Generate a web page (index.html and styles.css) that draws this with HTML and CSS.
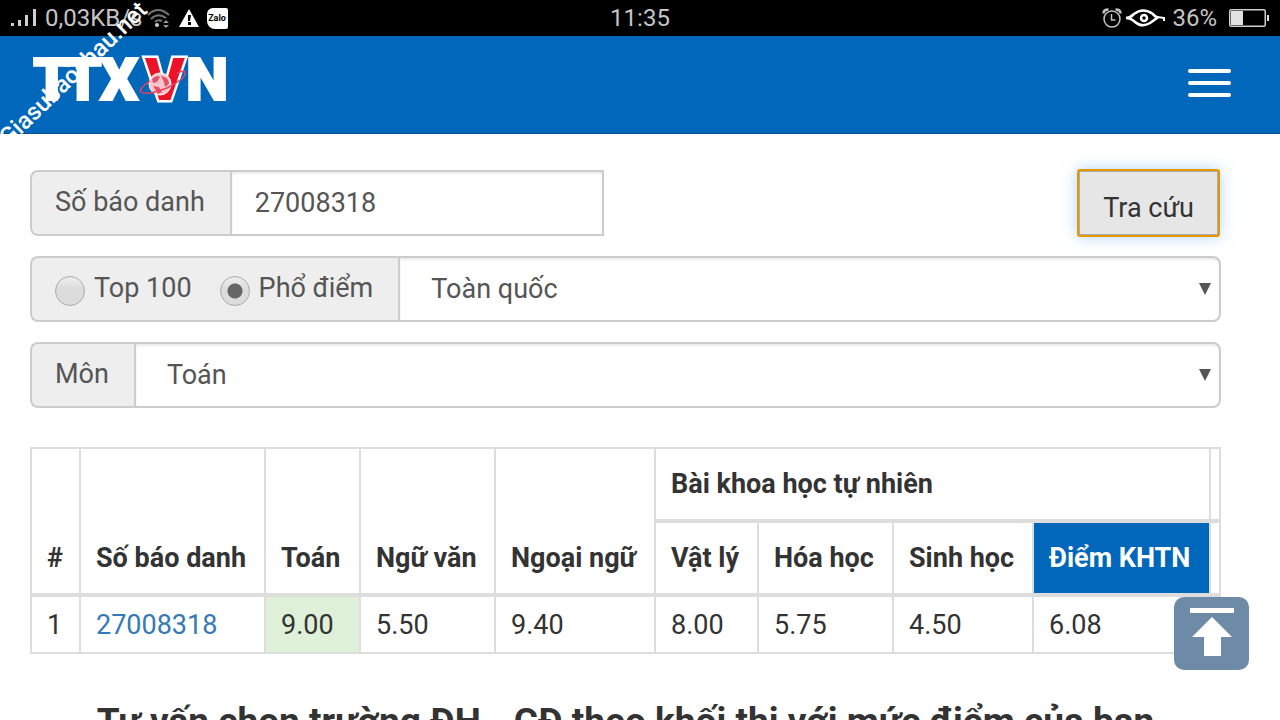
FILE: index.html
```html
<!DOCTYPE html>
<html lang="vi">
<head>
<meta charset="utf-8">
<meta name="viewport" content="width=device-width, initial-scale=1">
<title>TTXVN - Tra cứu điểm thi</title>
<link rel="stylesheet" href="styles.css">
</head>
<body>
<div class="status">
  <div class="status-side">
    <svg class="signal" width="26" height="20" viewBox="0 0 26 20" fill="#d0d0d0"><path d="M0 15h3v3H0zM7 12h3v6H7zM14 7h3v11h-3zM22 1h3v17h-3z"/></svg>
    <span>0,03KB/s</span>
    <svg class="wifi" width="24" height="20" viewBox="0 0 24 20" fill="none" stroke="#777" stroke-width="2"><path d="M1 7Q11-3 22 7M4 11q7-7 15-1M8 14q3-3 7-1"/><circle cx="10" cy="17" r="2" fill="#ccc" stroke="none"/><path d="M16 15l3-3 3 3zM16 17l3 3 3-3z" fill="#999" stroke="none"/></svg>
    <svg class="warn" width="20" height="18" viewBox="0 0 20 18"><path d="M10 0l10 18H0z" fill="#fff"/><path d="M9 6h3l-1 6H9zM9 13h3v3H9z" fill="#000"/></svg>
    <span class="zalo">Zalo</span>
  </div>
  <time class="clock">11:35</time>
  <div class="status-side status-right">
    <svg width="20" height="20" viewBox="0 0 20 20" fill="none" stroke="#c4c4c4" stroke-width="1.5"><circle cx="10" cy="11" r="8"/><path d="M9.500 6v6h4"/><path d="M1.500 5.500q0-4 5-4M18.500 5.500q0-4-5-4" stroke-width="2.500"/></svg>
    <svg class="eye" width="42" height="18" viewBox="0 0 42 18" fill="none" stroke="#fff"><path d="M2 9q4 0 8-4 9-7 19 0l4 4q-4 3-7 5-8 5-15-1-4-4-9-4z" stroke-width="2.500"/><path d="M29 6q5 3 11 3v3" stroke-width="2"/><circle cx="20" cy="9" r="3" stroke-width="2.500"/></svg>
    <span>36%</span>
    <svg class="battery" width="40" height="18" viewBox="0 0 40 18"><rect x=".75" y=".75" width="35.500" height="16.500" rx="1.500" fill="none" stroke="#d0d0d0" stroke-width="1.500"/><path d="M2 2h12v14H2zM38 6h2v6h-2z" fill="#e2e2e2"/></svg>
  </div>
</div>

<header class="header">
  <a class="logo" href="#" aria-label="TTXVN">
    <svg width="196" height="52" viewBox="0 0 196 52">
      <g class="logo-text">
        <text x="0 31 67 153" y="47">TTXN</text>
        <text class="logo-v" x="112" y="47">V</text>
      </g>
      <g fill="none"><circle cx="127" cy="31" r="11" fill="#f6c5cc" stroke="#fff"/><path d="M119 26q5-5 8-2l-3 5-4 1zM128 23q8 1 8 8l-4 3-1-5zM120 33l6 1 3 5-4 2z" fill="#df5267"/><path d="M117 28q-12 8-9 11 5 4 26-4 20-10 18-16-1-2-8 1" stroke="#f0405a" stroke-width="1.500"/></g>
    </svg>
  </a>
  <button class="menu" type="button" aria-label="Menu"><span></span><span></span><span></span></button>
</header>
<div class="watermark">Giasubaochau.net</div>

<main class="content">
  <form class="search">
    <div class="search-row">
      <div class="group group-id">
        <label class="addon" for="sbd">Số báo danh</label>
        <input class="field" id="sbd" type="text" value="27008318">
      </div>
      <button class="submit" type="button">Tra cứu</button>
    </div>
    <div class="group">
      <div class="addon options">
        <label class="option"><input type="radio" name="mode"><span>Top 100</span></label>
        <label class="option"><input type="radio" name="mode" checked><span>Phổ điểm</span></label>
      </div>
      <div class="select-wrap"><select class="field" aria-label="Khu vực"><option>Toàn quốc</option></select></div>
    </div>
    <div class="group">
      <label class="addon" for="mon">Môn</label>
      <div class="select-wrap"><select class="field" id="mon"><option>Toán</option></select></div>
    </div>
  </form>

  <table class="scores">
    <colgroup><col class="c-no"><col class="c-id"><col class="c-math"><col class="c-lit"><col class="c-lang"><col class="c-phy"><col class="c-chem"><col class="c-bio"><col><col class="c-end"></colgroup>
    <thead>
      <tr><th rowspan="2">#</th><th rowspan="2">Số báo danh</th><th rowspan="2">Toán</th><th rowspan="2">Ngữ văn</th><th rowspan="2">Ngoại ngữ</th><th colspan="4">Bài khoa học tự nhiên</th><th class="end"></th></tr>
      <tr><th>Vật lý</th><th>Hóa học</th><th>Sinh học</th><th class="total">Điểm KHTN</th><th class="end"></th></tr>
    </thead>
    <tbody>
      <tr><td>1</td><td><a href="#">27008318</a></td><td class="good">9.00</td><td>5.50</td><td>9.40</td><td>8.00</td><td>5.75</td><td>4.50</td><td>6.08</td><td class="end"></td></tr>
    </tbody>
  </table>

  <h2 class="title">Tư vấn chọn trường ĐH - CĐ theo khối thi với mức điểm của bạn</h2>
</main>
<button class="to-top" type="button" aria-label="Lên đầu trang">
  <svg width="44" height="50" viewBox="0 0 44 50" fill="#fff"><path d="M0 0h44v5H0zM22 9l20 20H31v19H14V29H2z"/></svg>
</button>
</body>
</html>
```
FILE: styles.css
```css
* { box-sizing: border-box; }
html { scrollbar-width: none; }
body {
  margin: 0;
  background: #fff;
  color: #333;
  font: 27px/38px Roboto, "Noto Sans", sans-serif;
}
input, select, button { font: inherit; color: inherit; }

.status {
  display: grid;
  grid-template-columns: 1fr auto 1fr;
  align-items: center;
  height: 36px;
  padding: 0 11px;
  background: #000;
  color: #c4c4c4;
  font-size: 24px;
  line-height: 36px;
}
.status-side { display: flex; align-items: center; gap: 8px; }
.status-right { justify-content: flex-end; gap: 6px; }
.wifi { margin-left: -4px; }
.eye { margin-left: -4px; }
.battery { margin-left: 6px; }
.zalo {
  width: 21px;
  height: 21px;
  border-radius: 6px 2px 2px 8px;
  background: #fff;
  color: #000;
  font-size: 9px;
  font-weight: 700;
  line-height: 20px;
  text-align: center;
}

.header {
  display: flex;
  align-items: center;
  justify-content: space-between;
  height: 98px;
  padding: 0 49px 4px 33px;
  border-bottom: 1px solid #00508f;
  background: #0067ba;
}
.logo { display: flex; margin-top: -8px; }
.logo-text { font: 900 60px Roboto, sans-serif; fill: #fff; stroke: #fff; stroke-width: 2px; }
.logo-v { fill: #ed1228; stroke-width: 5px; paint-order: stroke; }
.menu {
  display: grid;
  gap: 8px;
  width: 43px;
  padding: 0;
  border: 0;
  background: none;
  cursor: pointer;
}
.menu span { height: 4px; border-radius: 2px; background: #fff; }
.watermark {
  position: absolute;
  top: 123px;
  left: 13px;
  color: #fff;
  font-size: 24px;
  font-weight: 500;
  line-height: 28px;
  white-space: nowrap;
  transform: rotate(-44deg);
  transform-origin: 0 100%;
  pointer-events: none;
}

.content { padding: 36px 59px 40px 30px; }
.search { display: grid; gap: 20px; margin-bottom: 39px; color: #555; }
.search-row { display: flex; justify-content: space-between; }
.group { display: flex; height: 66px; }
.group-id { width: 574px; }
.addon {
  display: flex;
  align-items: center;
  padding: 0 25px 2px 23px;
  border: 2px solid #ccc;
  border-right: 0;
  border-radius: 8px 0 0 8px;
  background: #eee;
  white-space: nowrap;
}
.options { gap: 28px; }
.option { display: flex; align-items: center; gap: 9px; }
.option input {
  appearance: none;
  width: 30px;
  height: 30px;
  margin: 6px 0 0;
  border: 1px solid #aaa;
  border-radius: 50%;
  background: linear-gradient(#eee, #dcdcdc 40%);
}
.option input:checked {
  background: radial-gradient(circle, #666 7px, transparent 8px), linear-gradient(#eee, #dcdcdc 40%);
}
.field {
  flex: 1;
  width: 100%;
  min-width: 0;
  height: 100%;
  padding: 0 23px;
  border: 2px solid #ccc;
  border-radius: 0;
  outline: 0;
  background: #fff;
  box-shadow: inset 0 2px 2px rgba(0, 0, 0, .08);
}
.select-wrap { position: relative; flex: 1; }
.select-wrap .field { appearance: none; padding: 0 31px; border-radius: 0 8px 8px 0; }
.select-wrap::after {
  position: absolute;
  top: 27px;
  right: 10px;
  border: 6px solid transparent;
  border-top: 12px solid #555;
  border-bottom: 0;
  content: "";
  pointer-events: none;
}
.submit {
  height: 66px;
  margin-right: 2px;
  padding: 10px 23px 0;
  border: 2px solid #adadad;
  border-radius: 2px;
  outline: 2px solid #e59700;
  outline-offset: -1px;
  background: #e6e6e6;
  box-shadow: 0 0 16px rgba(102, 175, 233, .6);
  color: #333;
}

.scores { width: 100%; table-layout: fixed; border-collapse: collapse; }
.scores th, .scores td { padding: 9px 15px 8px; border: 2px solid #ddd; text-align: left; white-space: nowrap; }
.scores th { padding: 16px 15px; border-bottom-width: 4px; font-weight: 700; vertical-align: bottom; }
.scores a { color: #337ab7; text-decoration: none; }
.scores .total { background: #0067ba; color: #fff; }
.scores .good { background: #dff0d8; }
.scores .end { padding: 0; }
.c-no { width: 49px; }
.c-id { width: 185px; }
.c-math { width: 95px; }
.c-lit { width: 135px; }
.c-lang { width: 160px; }
.c-phy { width: 103px; }
.c-chem { width: 135px; }
.c-bio { width: 140px; }
.c-end { width: 10px; }
.title { margin: 44px 0 0; font-size: 37px; font-weight: 700; line-height: 48px; text-align: center; white-space: nowrap; }
.to-top {
  position: fixed;
  right: 31px;
  bottom: 50px;
  display: grid;
  place-items: center;
  width: 75px;
  height: 73px;
  padding: 0 0 2px;
  border: 0;
  border-radius: 10px;
  background: #6d8ba7;
  cursor: pointer;
}
```
